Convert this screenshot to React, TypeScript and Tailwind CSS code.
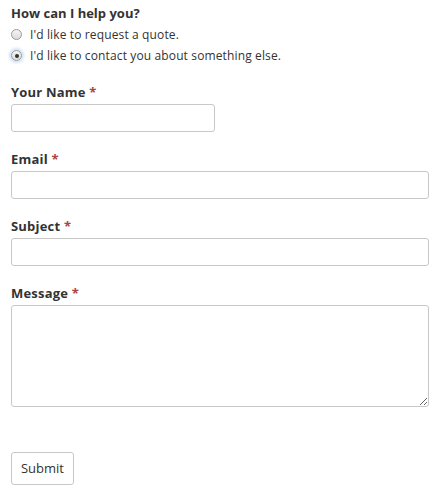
import React from "react";

const Req = () => <span className="text-[#a9443e]"> *</span>;

function Field({ label, wide = true, area = false, first = false }: { label: string; wide?: boolean; area?: boolean; first?: boolean }) {
  return (
    <div className={first ? "mt-[17px]" : "mt-[18px]"}>
      <label className="block font-bold text-[13px] leading-[18px] tracking-[0.2px] text-[#333]">
        {label}
        <Req />
      </label>
      {area ? (
        <textarea className="mt-[3px] block w-full h-[102px] border border-[#c8c8c8] rounded-[3px] bg-white" />
      ) : (
        <input
          className={`mt-[3px] block h-[28px] border border-[#c8c8c8] rounded-[3px] bg-white ${wide ? "w-full" : "w-[204px]"}`}
        />
      )}
    </div>
  );
}

function Radio({ checked, label }: { checked?: boolean; label: string }) {
  return (
    <div className="flex items-center h-[21px]">
      <span
        className={`w-[11px] h-[11px] rounded-full border border-[#9a9a9a] bg-gradient-to-b from-[#f4f4f4] to-[#dcdcdc] flex items-center justify-center ${checked ? "shadow-[0_0_3px_2px_#cfe3f7]" : ""}`}
      >
        {checked && <span className="w-[4px] h-[4px] rounded-full bg-[#333]" />}
      </span>
      <span className="ml-[8px] text-[12px] tracking-[0.13px] text-[#333]">{label}</span>
    </div>
  );
}

export default function App() {
  return (
    <div className="w-[440px] h-[496px] bg-white px-[11px] pt-[4px] font-['Open_Sans',sans-serif]">
      <div className="font-bold text-[13px] leading-[18px] text-[#333]">How can I help you?</div>
      <div className="mt-[2px]">
        <Radio label="I'd like to request a quote." />
        <Radio checked label="I'd like to contact you about something else." />
      </div>
      <Field label="Your Name" wide={false} first />
      <Field label="Email" />
      <Field label="Subject" />
      <Field label="Message" area />
      <button className="mt-[45px] block h-[33px] w-[63px] border border-[#c8c8c8] rounded-[3px] bg-white text-[13px] text-[#333]">
        Submit
      </button>
    </div>
  );
}
